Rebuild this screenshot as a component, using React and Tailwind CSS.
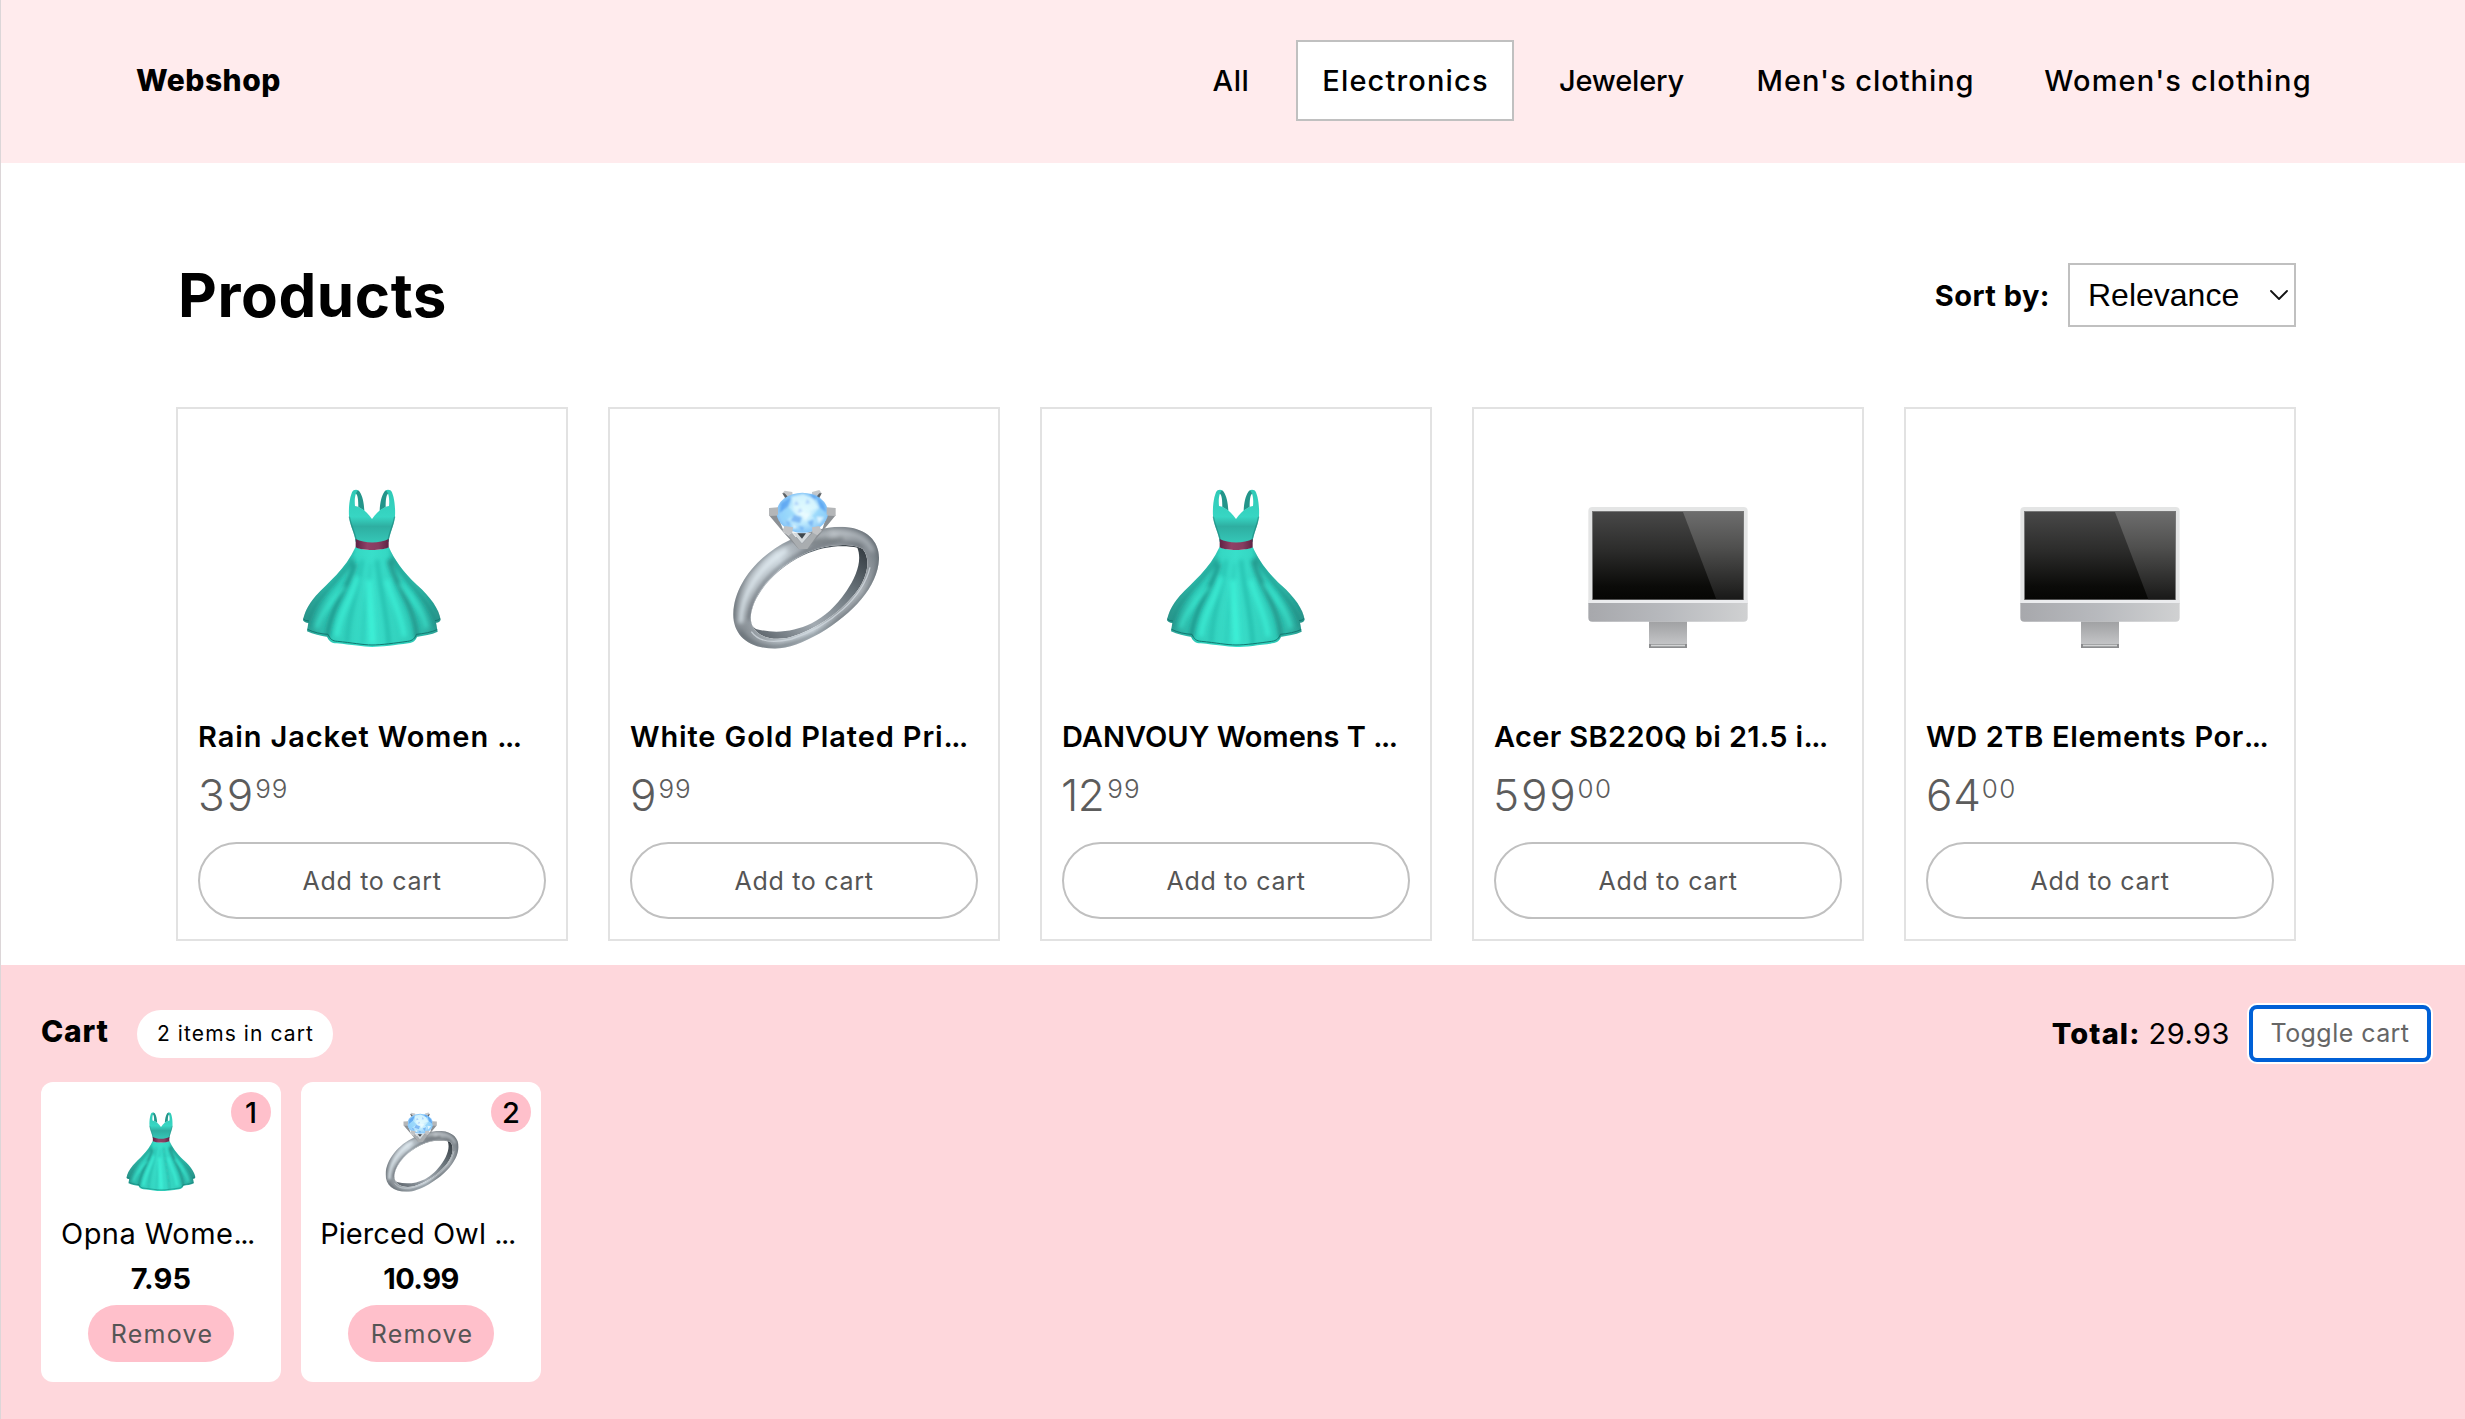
const NAV = [
  { label: 'All', className: 'w-[90px] tracking-[0.67px]' },
  { label: 'Electronics', className: 'w-[218px] pl-px tracking-[1.15px]', active: true },
  { label: 'Jewelery', className: 'w-[178px] pr-[3px] tracking-[-0.2px]' },
  { label: "Men's clothing", className: 'w-[267px] tracking-[0.95px]' },
  { label: "Women's clothing", className: 'w-[317px] pl-px tracking-[1.15px]' },
];

const PRODUCTS = [
  { title: 'Rain Jacket Women ', icon: 'dress', whole: '39', cents: '99', titleClass: 'tracking-[0.9px]', wholeClass: 'tracking-[2px]', centsClass: 'tracking-[1px]' },
  { title: 'White Gold Plated Pri', icon: 'ring', whole: '9', cents: '99', titleClass: 'tracking-[0.87px]', wholeClass: 'tracking-[2px]', centsClass: 'tracking-[1px]' },
  { title: 'DANVOUY Womens T ', icon: 'dress', whole: '12', cents: '99', titleClass: 'tracking-[0.02px]', wholeClass: 'tracking-[-0.5px] -ml-px mr-[3px]', centsClass: 'tracking-[1px]' },
  { title: 'Acer SB220Q bi 21.5 i', icon: 'screen', whole: '599', cents: '00', titleClass: 'tracking-[0.36px]', wholeClass: 'tracking-[1.8px] -ml-px', centsClass: 'tracking-[1.5px]' },
  { title: 'WD 2TB Elements Por', icon: 'screen', whole: '64', cents: '00', titleClass: 'tracking-[0.65px]', wholeClass: 'tracking-[0.8px]', centsClass: 'tracking-[1.5px]' },
];

const CART = [
  { title: 'Opna Wome', icon: 'dress', price: '7.95', count: 1, titleClass: 'tracking-[0.45px]', priceClass: 'tracking-[0.2px]' },
  { title: 'Pierced Owl ', icon: 'ring', price: '10.99', count: 2, titleClass: 'tracking-[0.05px]', priceClass: 'tracking-[-0.55px]' },
];

const SKIRT =
  'M212 200 C182 268 128 308 92 348 C68 376 58 400 54 421 C58 427 64 429 70 429 L66 454 C84 463 108 468 126 470 C132 484 140 489 155 490 C200 494 235 501 261 501 C290 501 330 495 370 490 C385 488 392 481 396 470 C415 467 440 464 458 455 L453 428 C460 428 465 425 467 419 C462 388 438 352 396 315 C352 274 328 238 311 200 C285 213 235 213 212 200Z';

function Dress({ id, className }) {
  return (
    <svg viewBox="21 27 480 480" className={className}>
      <defs>
        <linearGradient id={`${id}-top`} x1="0" y1="0" x2="0" y2="1">
          <stop offset="0" stopColor="#2fc9b6" />
          <stop offset=".5" stopColor="#37d6c3" />
          <stop offset=".68" stopColor="#2eaea1" />
          <stop offset="1" stopColor="#36c9b9" />
        </linearGradient>
        <linearGradient id={`${id}-skirt`} x1="0" y1="0" x2="1" y2="0">
          <stop offset="0" stopColor="#2a978d" />
          <stop offset=".2" stopColor="#30cbb8" />
          <stop offset=".5" stopColor="#38dfca" />
          <stop offset=".8" stopColor="#30cbb8" />
          <stop offset="1" stopColor="#2a978d" />
        </linearGradient>
        <linearGradient id={`${id}-belt`} x1="0" y1="0" x2="1" y2="0">
          <stop offset="0" stopColor="#5f2344" />
          <stop offset=".35" stopColor="#8f4066" />
          <stop offset=".7" stopColor="#863c60" />
          <stop offset="1" stopColor="#5f2344" />
        </linearGradient>
        <clipPath id={`${id}-clip`}>
          <path d={SKIRT} />
        </clipPath>
        <filter id={`${id}-soft`} x="-30%" y="-30%" width="160%" height="160%">
          <feGaussianBlur stdDeviation="6" />
        </filter>
      </defs>
      <path d="M212 33 Q218 28 224 35 C233 48 237 70 238 92 L220 81 C220 62 219 46 212 40Z" fill="#23958a" />
      <path d="M310 33 Q304 28 298 35 C289 48 285 70 284 92 L302 81 C302 62 303 46 310 40Z" fill="#23958a" />
      <path
        d="M192 108 C190 75 197 36 206 31 Q213 28 220 31 C210 38 208 60 210 78 C231 82 248 98 261 117 C274 98 291 82 312 78 C314 60 312 38 302 31 Q309 28 316 31 C325 36 332 75 330 108 C327 138 314 158 311 186 Q261 196 212 186 C209 158 195 138 192 108Z"
        fill={`url(#${id}-top)`}
      />
      <path d="M193 110 C198 140 210 158 214 182 M329 110 C324 140 312 158 309 182" fill="none" stroke="#1d8379" strokeWidth="4" opacity=".6" />
      <path d={SKIRT} fill={`url(#${id}-skirt)`} />
      <g clipPath={`url(#${id}-clip)`}>
        <g fill="none" stroke="#1c857c" filter={`url(#${id}-soft)`}>
          <path d="M206 235 C160 310 85 350 66 440" strokeWidth="10" opacity=".75" />
          <path d="M210 250 C190 330 138 370 126 475" strokeWidth="13" opacity=".8" />
          <path d="M232 240 C222 330 192 380 186 490" strokeWidth="7" opacity=".4" />
          <path d="M258 250 C250 330 236 400 232 500" strokeWidth="6" opacity=".25" />
          <path d="M276 240 C284 330 306 390 312 500" strokeWidth="8" opacity=".45" />
          <path d="M312 240 C330 320 388 370 396 475" strokeWidth="13" opacity=".85" />
          <path d="M318 230 C360 310 440 360 458 445" strokeWidth="10" opacity=".75" />
          <path d="M204 208 C165 290 60 340 50 425 M318 208 C357 290 462 340 472 425" strokeWidth="7" opacity=".7" />
        </g>
        <g fill="none" stroke="#3ff8dd" filter={`url(#${id}-soft)`}>
          <path d="M218 290 C205 350 165 390 155 470" strokeWidth="15" opacity=".65" />
          <path d="M180 320 C150 350 105 400 95 445" strokeWidth="11" opacity=".6" />
          <path d="M252 300 C252 370 262 420 262 490" strokeWidth="18" opacity=".7" />
          <path d="M305 300 C320 360 350 400 358 470" strokeWidth="15" opacity=".65" />
          <path d="M345 310 C375 350 415 390 425 445" strokeWidth="11" opacity=".6" />
        </g>
        <path
          d="M54 416 Q60 423 72 423 M66 447 C86 458 110 462 129 463 C136 478 142 483 157 484 C200 488 235 495 261 495 C290 495 330 489 368 484 C383 482 390 475 394 463 C415 461 440 457 458 448 M450 422 Q460 422 467 414"
          fill="none"
          stroke="#137870"
          strokeWidth="3"
        />
      </g>
      <path d="M212 177 C238 191 285 191 311 177 L311 202 C290 213 233 213 212 202Z" fill={`url(#${id}-belt)`} />
    </svg>
  );
}

function Ring({ id, className }) {
  const inner = 'M92 412 C95 345 160 268 250 223 C315 190 395 188 428 207 C456 240 440 300 402 345 C350 405 290 447 210 472 C150 486 92 466 92 412Z';
  return (
    <svg viewBox="12 27 480 480" className={className}>
      <defs>
        <linearGradient id={`${id}-band`} x1="0" y1=".7" x2="1" y2=".3">
          <stop offset="0" stopColor="#7d848a" />
          <stop offset=".2" stopColor="#b2bac0" />
          <stop offset=".42" stopColor="#cbd5dc" />
          <stop offset=".6" stopColor="#9ba2a8" />
          <stop offset=".8" stopColor="#adb3b8" />
          <stop offset="1" stopColor="#737b82" />
        </linearGradient>
        <linearGradient id={`${id}-wall`} x1="1" y1="0" x2="0" y2="1">
          <stop offset="0" stopColor="#2f363c" />
          <stop offset=".3" stopColor="#667077" />
          <stop offset=".65" stopColor="#a3abb2" />
          <stop offset="1" stopColor="#535b62" />
        </linearGradient>
        <radialGradient id={`${id}-gem`} cx=".5" cy=".5" r=".55">
          <stop offset="0" stopColor="#e9fcff" />
          <stop offset=".5" stopColor="#bce9fd" />
          <stop offset="1" stopColor="#78bcf6" />
        </radialGradient>
        <clipPath id={`${id}-clip`} clipPathUnits="userSpaceOnUse">
          <path
            clipRule="evenodd"
            d={`M40 400 C42 312 118 222 210 180 C268 152 330 137 375 141 C442 146 479 185 477 238 C473 320 400 400 300 460 C250 488 205 506 165 506 C85 505 38 465 40 400Z ${inner}`}
          />
        </clipPath>
        <filter id={`${id}-soft`} x="-30%" y="-30%" width="160%" height="160%">
          <feGaussianBlur stdDeviation="6" />
        </filter>
        <filter id={`${id}-sparkle`} x="-10%" y="-10%" width="120%" height="120%">
          <feGaussianBlur stdDeviation="2.5" />
        </filter>
      </defs>
      <path
        fillRule="evenodd"
        d={`${inner} M92 414 C95 350 160 270 250 226 C310 197 370 194 412 203 C427 240 410 288 380 332 C345 383 315 408 275 430 C220 456 165 462 108 447 C96 440 92 428 92 414Z`}
        fill={`url(#${id}-wall)`}
      />
      <g clipPath={`url(#${id}-clip)`}>
        <rect x="30" y="130" width="460" height="390" fill={`url(#${id}-band)`} />
        <g fill="none" filter={`url(#${id}-soft)`}>
          <path d="M40 420 C36 310 118 222 210 182 C268 152 330 137 375 140 C442 146 479 185 477 238" stroke="#5b636a" strokeWidth="7" opacity=".85" />
          <path d="M62 430 C62 340 120 258 200 210" stroke="#e3edf3" strokeWidth="14" opacity=".85" />
          <path d="M330 166 C400 152 440 170 458 215" stroke="#d5dce1" strokeWidth="10" opacity=".6" />
          <path d="M86 420 C90 340 160 262 250 218 C315 186 390 182 428 202" stroke="#545c63" strokeWidth="9" opacity=".75" />
          <path d="M270 190 C305 178 340 182 370 172" stroke="#4b5157" strokeWidth="14" opacity=".5" />
          <path d="M60 455 C90 500 150 512 215 492 C350 450 470 340 478 240" stroke="#5b636a" strokeWidth="9" opacity=".85" />
        </g>
        <path d="M94 455 C120 492 170 488 215 477 C330 440 430 350 450 262" fill="none" stroke="#cfd7dd" strokeWidth="4" opacity=".8" />
      </g>
      <path d="M147 106 L173 106 L192 157 L246 196 L305 155 L320 106 L347 106 L305 157 L262 207 L236 207 L192 159Z" fill="#8c9094" />
      <path d="M205 165 L216 158 L246 192 L278 158 L292 165 L262 207 L236 207Z" fill="#a9adb0" />
      <path d="M218 158 L246 190 L274 158Z" fill="#d5dadd" />
      <path d="M232 160 L246 176 L258 160Z" fill="#3f474d" />
      <path d="M187 40 L194 32 L217 36 L218 52 L198 60Z M305 40 L298 30 L276 36 L277 52 L296 60Z" fill="#c6c8ca" />
      <path d="M187 40 L200 60 L205 52 L194 40Z M305 40 L294 60 L288 52 L298 40Z" fill="#5d6164" />
      <ellipse cx="247" cy="98" rx="77" ry="60" fill={`url(#${id}-gem)`} />
      <g opacity=".75" filter={`url(#${id}-sparkle)`}>
        <path d="M183 70 L214 50 L204 80 L178 100Z M290 48 L312 72 L320 98 L300 84Z M268 42 L290 48 L284 62Z" fill="#4f9cf0" />
        <path d="M204 80 L228 104 L190 124 L178 104Z M300 84 L320 104 L300 130 L276 108Z" fill="#8fd3fb" />
        <path d="M214 50 L250 42 L282 58 L296 84 L262 96 L222 90Z" fill="#e2fbff" />
        <path d="M222 104 L246 112 L240 130 L212 122Z M262 126 L282 118 L276 142Z M196 120 L210 128 L206 140Z M236 138 L252 142 L246 154Z" fill="#69a9f2" />
        <path d="M246 100 L272 98 L256 124Z M218 130 L232 142 L220 148Z M290 110 L312 112 L296 132Z" fill="#effdff" />
        <path d="M228 62 L238 74 L222 76Z M262 56 L270 70 L256 72Z M240 84 L248 94 L232 98Z" fill="#a6c8fb" />
      </g>
      <path d="M147 84 L174 82 L174 104 L147 108Z M320 82 L347 84 L347 108 L320 104Z" fill="#b4b6b8" />
      <path d="M187 152 L194 138 L219 142 L217 158 L204 166Z M305 152 L298 138 L276 142 L277 158 L292 166Z" fill="#c1c2c4" />
    </svg>
  );
}

function Screen({ id, className }) {
  return (
    <svg viewBox="384 267 480 480" className={className}>
      <defs>
        <linearGradient id={`${id}-glass`} x1="0" y1="0" x2="0" y2="1">
          <stop offset="0" stopColor="#484848" />
          <stop offset=".45" stopColor="#2b2b2a" />
          <stop offset=".85" stopColor="#0b0b09" />
          <stop offset="1" stopColor="#060604" />
        </linearGradient>
        <linearGradient id={`${id}-glare`} x1="0" y1="0" x2="0" y2="1">
          <stop offset="0" stopColor="#6d6d6d" />
          <stop offset=".4" stopColor="#50504f" />
          <stop offset="1" stopColor="#191918" />
        </linearGradient>
        <linearGradient id={`${id}-chin`} x1="0" y1="0" x2="1" y2="0">
          <stop offset="0" stopColor="#a7a8ac" />
          <stop offset=".5" stopColor="#b8babe" />
          <stop offset="1" stopColor="#d0d1d2" />
        </linearGradient>
        <linearGradient id={`${id}-stand`} x1="0" y1="0" x2="0" y2="1">
          <stop offset="0" stopColor="#a0a1a3" />
          <stop offset="1" stopColor="#c9cacc" />
        </linearGradient>
      </defs>
      <path d="M385 333 Q385 321 397 321 L851 321 Q863 321 863 333 L863 612 L385 612Z" fill="#e4e5e5" />
      <path d="M385 600 H863 V612 H385Z" fill="#ebecee" />
      <path d="M385 609 H863 V653 Q863 665 851 665 H397 Q385 665 385 653Z" fill={`url(#${id}-chin)`} />
      <rect x="396" y="333" width="456" height="267" fill="#777" />
      <rect x="399" y="336" width="450" height="262" fill={`url(#${id}-glass)`} />
      <path d="M669 336 H849 V598 H769Z" fill={`url(#${id}-glare)`} />
      <rect x="567" y="665" width="114" height="79" fill={`url(#${id}-stand)`} />
      <rect x="567" y="732" width="114" height="12" fill="#8b8c8e" />
      <rect x="573" y="734" width="102" height="5" fill="#d3d4d5" />
    </svg>
  );
}

const ICONS = { dress: Dress, ring: Ring, screen: Screen };

function Header() {
  return (
    <header className="flex h-[163px] shrink-0 items-start justify-between bg-[#ffebed] pt-10 pr-[129px] pl-[135px]">
      <div className="text-[30px] leading-[81px] font-extrabold tracking-[0.5px]">Webshop</div>
      <nav className="flex gap-5 text-[29px] font-medium">
        {NAV.map((item) => (
          <a
            key={item.label}
            className={`flex h-[81px] items-center justify-center border-2 whitespace-nowrap ${
              item.active ? 'border-[#c0c0c0] bg-white' : 'border-transparent'
            } ${item.className}`}
          >
            {item.label}
          </a>
        ))}
      </nav>
    </header>
  );
}

function ProductCard({ product, id }) {
  const Icon = ICONS[product.icon];
  return (
    <article className="flex h-[534px] flex-col border-2 border-[#e2e2e2] px-5 pt-20">
      <Icon id={id} className="size-40 self-center" />
      <h2 className={`mt-[68px] text-[29px] leading-10 font-semibold whitespace-nowrap ${product.titleClass}`}>
        {product.title}
        <span className="tracking-[-1.5px]">...</span>
      </h2>
      <div className="mt-[13px] flex h-[50px] items-start font-light text-[#5c5c5c]">
        <span className={`text-[44px] leading-[50px] ${product.wholeClass}`}>{product.whole}</span>
        <span className={`text-[26px] leading-[38px] ${product.centsClass}`}>{product.cents}</span>
      </div>
      <button className="mt-[22px] h-[77px] rounded-full border-2 border-[#c0c0c0] pt-0.5 text-[25px] tracking-[0.7px] text-[#555]">
        Add to cart
      </button>
    </article>
  );
}

function CartItem({ item, id }) {
  const Icon = ICONS[item.icon];
  return (
    <li className="relative flex h-[300px] w-60 flex-col items-center rounded-xl bg-white pt-[30px]">
      <span className="absolute top-2.5 right-2.5 flex size-10 items-center justify-center rounded-full bg-[#ffc0cb] pt-px text-[29px] font-medium">
        {item.count}
      </span>
      <Icon id={id} className="size-20" />
      <div className={`mt-[22px] pr-[7px] text-[29px] leading-10 whitespace-nowrap ${item.titleClass}`}>
        {item.title}
        <span className="tracking-[-1.5px]">...</span>
      </div>
      <div className={`mt-[5px] text-[29px] leading-10 font-bold ${item.priceClass}`}>{item.price}</div>
      <button className="mt-1.5 h-[57px] w-[146px] rounded-full bg-[#ffc0cb] pt-0.5 pl-0.5 text-[25px] tracking-[1.3px] text-[#555]">
        Remove
      </button>
    </li>
  );
}

function Cart() {
  return (
    <section className="flex-1 bg-[#fed7dc] pt-10 pr-[34px] pl-10">
      <div className="flex h-[57px] items-center">
        <h2 className="w-24 pb-1 text-[30px] font-extrabold tracking-[0.8px]">Cart</h2>
        <span className="flex h-12 w-[196px] items-center justify-center rounded-full bg-white pl-px text-[21px] tracking-[1.1px]">
          2 items in cart
        </span>
        <div className="mr-[19px] ml-auto flex gap-2 text-[29px]">
          <strong className="font-extrabold tracking-[1.1px]">Total:</strong>
          <span className="tracking-[0.5px]">29.93</span>
        </div>
        <button className="h-[57px] w-[182px] rounded-lg border-4 border-[#0060d6] bg-white pt-px text-[25px] tracking-[0.45px] text-[#666] ring-2 ring-white">
          Toggle cart
        </button>
      </div>
      <ul className="mt-5 flex gap-5">
        {CART.map((item) => (
          <CartItem key={item.title} item={item} id={`cart-${item.icon}`} />
        ))}
      </ul>
    </section>
  );
}

export default function App() {
  return (
    <div className="flex h-[1419px] w-full flex-col overflow-hidden border-l border-[#dcd6d8] bg-white font-['Inter',sans-serif] text-black">
      <Header />
      <main className="h-[802px] shrink-0 pt-[100px] pr-[169px] pl-[175px]">
        <div className="flex h-16 items-center">
          <h1 className="pl-0.5 text-[60px] leading-[64px] font-bold tracking-[0.6px]">Products</h1>
          <label className="mr-[18px] ml-auto pt-0.5 text-[29px] font-bold tracking-[0.45px]">Sort by:</label>
          <div className="flex h-16 w-[228px] items-center justify-between border-2 border-[#c0c0c0] bg-white pr-[5px] pl-[18px] font-['Liberation_Sans',sans-serif] text-[32px]">
            <span>Relevance</span>
            <svg viewBox="0 0 20 12" className="h-3 w-5" fill="none" stroke="#111" strokeWidth="1.8" strokeLinecap="round" strokeLinejoin="round">
              <path d="M2 2 L10 10 L18 2" />
            </svg>
          </div>
        </div>
        <div className="mt-20 grid grid-cols-5 gap-10">
          {PRODUCTS.map((product, i) => (
            <ProductCard key={product.title} product={product} id={`product-${i}`} />
          ))}
        </div>
      </main>
      <Cart />
    </div>
  );
}
